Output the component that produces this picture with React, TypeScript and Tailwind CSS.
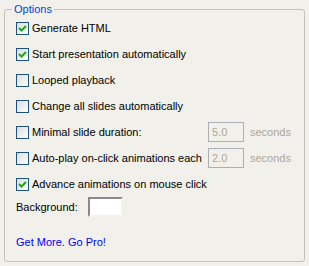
import React from "react";

function CheckBox({ checked }: { checked: boolean }) {
  return (
    <div className="w-[13px] h-[13px] shrink-0 border border-[#1c5180] bg-gradient-to-br from-[#dcdcd7] to-white flex items-center justify-center">
      {checked && (
        <svg width="11" height="11" viewBox="0 0 11 11">
          <path d="M2 5 L4.5 7.5 L9 3" fill="none" stroke="#21a121" strokeWidth="2" />
        </svg>
      )}
    </div>
  );
}

const options = [
  { label: "Generate HTML", checked: true },
  { label: "Start presentation automatically", checked: true },
  { label: "Looped playback", checked: false },
  { label: "Change all slides automatically", checked: false },
  { label: "Minimal slide duration:", checked: false, value: "5.0" },
  { label: "Auto-play on-click animations each", checked: false, value: "2.0" },
  { label: "Advance animations on mouse click", checked: true },
];

export default function App() {
  return (
    <div
      className="w-[309px] h-[266px] bg-[#f1f0ea] text-[11px] text-black overflow-hidden pt-[9px] pl-[4px]"
      style={{ fontFamily: '"Liberation Sans", Arial, sans-serif' }}
    >
      <div className="relative w-[301px] h-[253px] border border-[#c2c2ba] rounded-[3px] pl-[11px] pt-[5px]">
        <span className="absolute -top-[7px] left-[7px] px-[2px] bg-[#f1f0ea] leading-[13px] text-[#0046d5]">
          Options
        </span>
        {options.map((o) => (
          <div key={o.label} className="h-[26px] flex items-center">
            <div className={`flex items-center ${o.value ? "w-[192px]" : ""}`}>
              <CheckBox checked={o.checked} />
              <span className="ml-[3px] leading-[13px]">{o.label}</span>
            </div>
            {o.value && (
              <>
                <div className="w-[36px] h-[20px] border border-[#aab0b5] pl-[3px] flex items-center text-[#aca899]">
                  {o.value}
                </div>
                <span className="ml-[6px] text-[#aca899]">seconds</span>
              </>
            )}
          </div>
        ))}
        <div className="h-[20px] flex items-center">
          <span className="w-[72px]">Background:</span>
          <div className="w-[35px] h-[20px] border-2 border-t-[#8a8a8a] border-l-[#8a8a8a] border-b-[#f4f3ea] border-r-[#f4f3ea] bg-white" />
        </div>
        <div className="mt-[19px] leading-[13px] text-[#0000ff]">Get More. Go Pro!</div>
      </div>
    </div>
  );
}
